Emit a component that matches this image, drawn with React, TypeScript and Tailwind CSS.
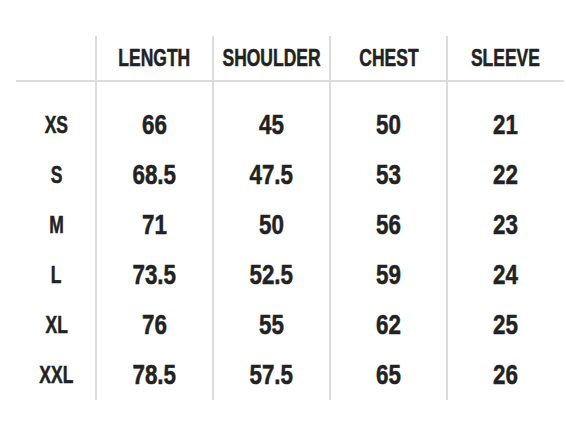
const columns = ["LENGTH", "SHOULDER", "CHEST", "SLEEVE"];

const rows = [
  { size: "XS", values: ["66", "45", "50", "21"] },
  { size: "S", values: ["68.5", "47.5", "53", "22"] },
  { size: "M", values: ["71", "50", "56", "23"] },
  { size: "L", values: ["73.5", "52.5", "59", "24"] },
  { size: "XL", values: ["76", "55", "62", "25"] },
  { size: "XXL", values: ["78.5", "57.5", "65", "26"] },
];

export default function App() {
  return (
    <div className="h-[436px] w-[566px] bg-white pl-4 pt-9 font-['Liberation_Sans',Arial,sans-serif] text-[#222] [-webkit-text-stroke:0.5px_#222]">
      <div className="flex h-[46px] w-[548px] border-b-2 border-[#dcdcdc]">
        <div className="w-[79px]" />
        {columns.map((col) => (
          <div
            key={col}
            className="flex w-[117px] items-center justify-center border-l-2 border-[#dcdcdc] text-[23px] font-bold"
          >
            <span className="inline-block scale-x-[0.76] whitespace-nowrap">{col}</span>
          </div>
        ))}
      </div>
      <div className="flex w-[548px]">
        <div className="flex w-[79px] flex-col pt-[18px]">
          {rows.map((r) => (
            <div key={r.size} className="flex h-[50px] items-center justify-center pl-[2px] text-[23px] font-bold">
              <span className="inline-block scale-x-[0.76]">{r.size}</span>
            </div>
          ))}
        </div>
        {columns.map((col, ci) => (
          <div key={col} className="flex w-[117px] flex-col border-l-2 border-[#dcdcdc] pt-[18px]">
            {rows.map((r) => (
              <div key={r.size} className="flex h-[50px] items-center justify-center text-[28px] font-bold">
                <span className="inline-block scale-x-[0.8]">{r.values[ci]}</span>
              </div>
            ))}
          </div>
        ))}
      </div>
    </div>
  );
}
